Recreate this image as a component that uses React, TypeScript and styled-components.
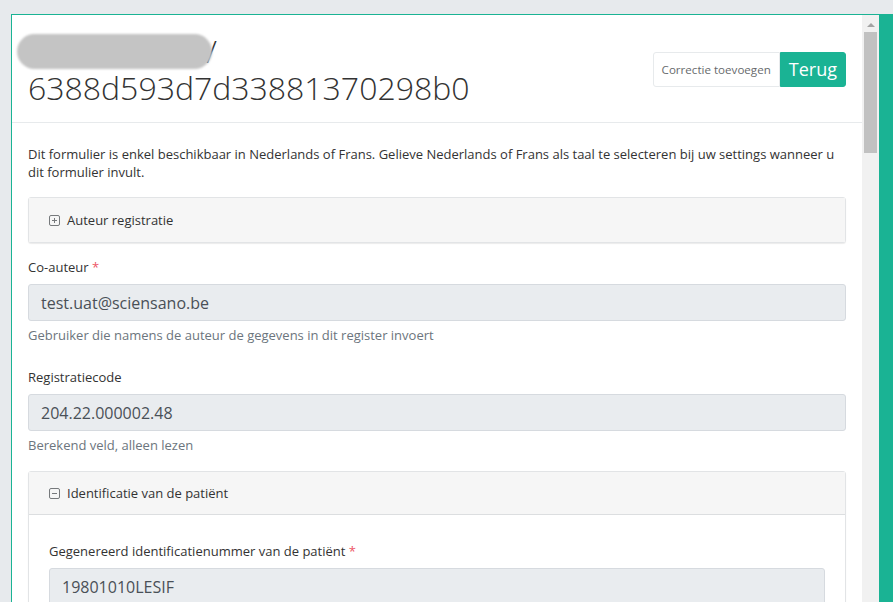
import styled, { createGlobalStyle } from "styled-components";

const GlobalStyle = createGlobalStyle`
  html, body {
    margin: 0;
    height: 100%;
    overflow: hidden;
  }
  body {
    font-family: "Open Sans", "Noto Sans", sans-serif;
    color: #333;
    background: #e7eaed;
  }
  #root {
    height: 100%;
  }
`;

const teal = "#1ab394";

const Page = styled.div`
  height: 100%;
  padding: 14px 0 0 11px;
  box-sizing: border-box;
`;

const Window = styled.div`
  display: flex;
  height: 100%;
  background: #fff;
  border-top: 1px solid ${teal};
  border-left: 1px solid ${teal};
  box-sizing: border-box;
`;

const Main = styled.div`
  flex: 1;
  min-width: 0;
`;

const Header = styled.header`
  display: flex;
  align-items: center;
  justify-content: space-between;
  padding: 17px 16px 16px 16px;
  border-bottom: 1px solid #e7eaec;
`;

const Title = styled.h2`
  margin: 0;
  font-size: 32px;
  line-height: 37px;
  font-weight: 300;
  color: #333;
`;

const Redacted = styled.span`
  position: relative;
  z-index: 1;
  display: inline-block;
  width: 195px;
  height: 35px;
  margin-left: -11px;
  margin-right: -6px;
  vertical-align: -6px;
  border-radius: 18px;
  background: #c4c4c4;
  filter: blur(1px);
`;

const ButtonGroup = styled.div`
  display: flex;
`;

const Button = styled.button<{ $primary?: boolean }>`
  height: 35px;
  padding: 0 ${({ $primary }) => ($primary ? "8px" : "8px")};
  margin: 0;
  font-family: inherit;
  font-size: ${({ $primary }) => ($primary ? "18px" : "11.6px")};
  color: ${({ $primary }) => ($primary ? "#fff" : "#676a6c")};
  background: ${({ $primary }) => ($primary ? teal : "#fff")};
  border: 1px solid ${({ $primary }) => ($primary ? teal : "#e7eaec")};
  border-radius: ${({ $primary }) => ($primary ? "0 3px 3px 0" : "3px 0 0 3px")};
  cursor: pointer;
`;

const Body = styled.div`
  padding: 22px 16px 0 16px;
`;

const Notice = styled.p`
  margin: 0 0 16px;
  font-size: 13px;
  line-height: 18px;
  color: #333;
`;

const Panel = styled.div`
  border: 1px solid #e2e4e6;
  border-radius: 3px;
  box-shadow: 0 1px 1px rgba(0, 0, 0, 0.08);
  background: #fff;
`;

const PanelHeading = styled.div<{ $open?: boolean }>`
  display: flex;
  align-items: center;
  gap: 7px;
  height: ${({ $open }) => ($open ? "42px" : "44px")};
  padding: 0 20px;
  background: #f6f6f6;
  font-size: 13px;
  color: #333;
  border-bottom: ${({ $open }) => ($open ? "1px solid #dcdee0" : "none")};
`;

const PanelBody = styled.div`
  padding: 27px 20px 20px;
`;

const Group = styled.div<{ $first?: boolean }>`
  margin-top: ${({ $first }) => ($first ? "15px" : "0")};
  margin-bottom: 17px;
`;

const Label = styled.label`
  display: block;
  margin-bottom: 8px;
  font-size: 13px;
  line-height: 18px;
  color: #333;
`;

const Required = styled.span`
  color: #ed5565;
`;

const Field = styled.div`
  height: 37px;
  display: flex;
  align-items: center;
  padding: 0 12px;
  box-sizing: border-box;
  background: #e9ecef;
  border: 1px solid #d6dadf;
  border-radius: 3px;
  font-size: 16px;
  color: #495057;
`;

const Help = styled.div`
  margin-top: 5px;
  font-size: 13px;
  line-height: 18px;
  color: #6c757d;
`;

const Spacer = styled.div`
  height: 7px;
`;

const Scrollbar = styled.div`
  display: flex;
  flex-direction: column;
  align-items: center;
  width: 17px;
  background: #f1f1f1;
`;

const Arrow = styled.div`
  margin-top: 8px;
  width: 0;
  height: 0;
  border-left: 4px solid transparent;
  border-right: 4px solid transparent;
  border-bottom: 4px solid #a3a3a3;
`;

const Thumb = styled.div`
  margin-top: 5px;
  width: 13px;
  height: 121px;
  background: #c1c1c1;
`;

const SideStrip = styled.div`
  width: 14px;
  background: ${teal};
`;

const ToggleIcon = ({ open }: { open?: boolean }) => (
  <svg width="11" height="11" viewBox="0 0 11 11">
    <rect x="0.5" y="0.5" width="10" height="10" rx="1.5" fill="none" stroke="#76797c" />
    <line x1="3" y1="5.5" x2="8" y2="5.5" stroke="#76797c" />
    {!open && <line x1="5.5" y1="3" x2="5.5" y2="8" stroke="#76797c" />}
  </svg>
);

export default function App() {
  return (
    <>
      <GlobalStyle />
      <Page>
        <Window>
          <Main>
            <Header>
              <Title>
                <Redacted />/
                <br />
                6388d593d7d33881370298b0
              </Title>
              <ButtonGroup>
                <Button>Correctie toevoegen</Button>
                <Button $primary>Terug</Button>
              </ButtonGroup>
            </Header>
            <Body>
              <Notice>
                Dit formulier is enkel beschikbaar in Nederlands of Frans. Gelieve Nederlands of Frans als
                taal te selecteren bij uw settings wanneer u dit formulier invult.
              </Notice>
              <Panel>
                <PanelHeading>
                  <ToggleIcon />
                  Auteur registratie
                </PanelHeading>
              </Panel>
              <Group $first>
                <Label>
                  Co-auteur <Required>*</Required>
                </Label>
                <Field>test.uat@sciensano.be</Field>
                <Help>Gebruiker die namens de auteur de gegevens in dit register invoert</Help>
              </Group>
              <Spacer />
              <Group>
                <Label>Registratiecode</Label>
                <Field>204.22.000002.48</Field>
                <Help>Berekend veld, alleen lezen</Help>
              </Group>
              <Panel>
                <PanelHeading $open>
                  <ToggleIcon open />
                  Identificatie van de patiënt
                </PanelHeading>
                <PanelBody>
                  <Group>
                    <Label>
                      Gegenereerd identificatienummer van de patiënt <Required>*</Required>
                    </Label>
                    <Field>19801010LESIF</Field>
                  </Group>
                </PanelBody>
              </Panel>
            </Body>
          </Main>
          <Scrollbar>
            <Arrow />
            <Thumb />
          </Scrollbar>
          <SideStrip />
        </Window>
      </Page>
    </>
  );
}
